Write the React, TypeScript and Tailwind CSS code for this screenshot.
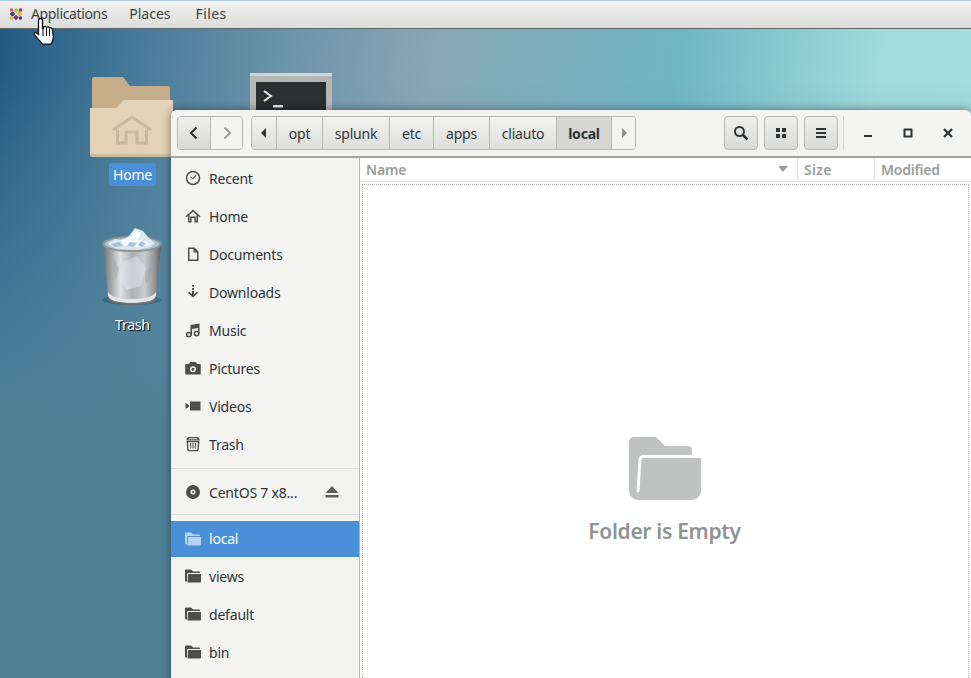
import type { ReactNode } from "react";

const iconColor = "#4d4d4d";

function Glyph({ children, className = "" }: { children: ReactNode; className?: string }) {
  return (
    <svg viewBox="0 0 16 16" width="16" height="16" fill={iconColor} className={"shrink-0 " + className}>
      {children}
    </svg>
  );
}

const FolderGlyph = ({ color = iconColor }: { color?: string }) => (
  <svg viewBox="0 0 16 16" width="16" height="16" className="shrink-0">
    <path d="M0 2.500a1 1 0 0 1 1-1h5l2 2h6a1 1 0 0 1 1 1V5H3a1 1 0 0 0-1 1v7.500H1a1 1 0 0 1-1-1z" fill={color} />
    <path d="M3 6h13v7.500a1 1 0 0 1-1 1H2.600z" fill={color} />
  </svg>
);

const places: { label: string; icon: ReactNode }[] = [
  {
    label: "Recent",
    icon: (
      <Glyph>
        <circle cx="8" cy="8" r="6.500" fill="none" stroke={iconColor} strokeWidth="1.500" />
        <path d="M8 8.600 11 5.200M8 8.600 5.600 7" fill="none" stroke={iconColor} strokeWidth="1.100" />
      </Glyph>
    ),
  },
  {
    label: "Home",
    icon: (
      <Glyph>
        <path
          d="M8 1.500 0.500 8.200l1 1L3 8v6.500h3.600V10h2.800v4.500H13V8l1.500 1.200 1-1zM8 3.800l3.500 3v6.200h-.6V8.500H5.100V13h-.6V6.800z"
          fillRule="evenodd"
        />
      </Glyph>
    ),
  },
  {
    label: "Documents",
    icon: (
      <Glyph>
        <path d="M3 1.500h6.500L13.500 5.500v9.500H3z M4.500 3v10.500h7.500V6.500H8.500V3z" fillRule="evenodd" />
      </Glyph>
    ),
  },
  {
    label: "Downloads",
    icon: (
      <Glyph>
        <path d="M7 1h2v1.800H7zM7 4h2v1.800H7zM7 7h2v3.300l2.900-2.500 1 1.100L8 13.500 3.100 8.900l1-1.100L7 10.300z" />
      </Glyph>
    ),
  },
  {
    label: "Music",
    icon: (
      <Glyph>
        <path d="M5.500 3 14.500 1.500v10h-1.500V6L7 7v6H5.500z" />
        <circle cx="3.800" cy="12.600" r="2.200" fill="none" stroke={iconColor} strokeWidth="1.500" />
        <circle cx="11.600" cy="11.600" r="2.200" fill="none" stroke={iconColor} strokeWidth="1.500" />
      </Glyph>
    ),
  },
  {
    label: "Pictures",
    icon: (
      <Glyph>
        <path
          d="M1 4h3l1-2h6l1 2h3a.8.8 0 0 1 .8.8v9a.8.8 0 0 1-.8.8H1a.8.8 0 0 1-.8-.8v-9A.8.8 0 0 1 1 4zm7 2.300a3 3 0 1 0 0 6 3 3 0 0 0 0-6zm0 1.500a1.500 1.500 0 1 1 0 3 1.500 1.500 0 0 1 0-3z"
          fillRule="evenodd"
        />
      </Glyph>
    ),
  },
  {
    label: "Videos",
    icon: (
      <Glyph>
        <path d="M5 3.500h10.500v9H5zM0.500 5l3.500 2.300v1.400L0.500 11z" />
      </Glyph>
    ),
  },
  {
    label: "Trash",
    icon: (
      <Glyph>
        <path d="M3 1h10l1.500 2v1.500h-13V3zM4 2.300 3.400 3.200h9.200L12 2.300z" fillRule="evenodd" />
        <path
          d="M1.500 5h13l-.8 9a1.500 1.500 0 0 1-1.500 1.300H3.800A1.500 1.500 0 0 1 2.300 14zm1.500 1.300.6 7.300.4.400h8l.4-.4.600-7.300z"
          fillRule="evenodd"
        />
        <path d="M5 7h1l.3 5.500h-1zM7.500 7h1v5.500h-1zM10 7h1l-.3 5.500h-1z" />
      </Glyph>
    ),
  },
];

const bookmarks = [{ label: "views" }, { label: "default" }, { label: "bin" }];

function SidebarRow({ icon, label, right }: { icon: ReactNode; label: string; right?: ReactNode }) {
  return (
    <div className="flex h-[38px] items-center gap-[8px] pl-[14px] pr-[20px] text-[#2e3436]">
      {icon}
      <span className="flex-1 truncate">{label}</span>
      {right}
    </div>
  );
}

function Segment({ width, children, active }: { width: string; children: ReactNode; active?: boolean }) {
  return (
    <div
      className={
        "flex h-full items-center justify-center border-r border-[#b6b6b3] " +
        width +
        (active
          ? " bg-[#d6d6d4] font-bold text-[#2e3436]"
          : " bg-gradient-to-b from-[#f2f2f1] to-[#dededc] text-[#2e3436]")
      }
    >
      {children}
    </div>
  );
}

function ToolButton({ children }: { children: ReactNode }) {
  return (
    <div className="flex h-[34px] w-[34px] items-center justify-center rounded-[4px] border border-[#b6b6b3] bg-gradient-to-b from-[#efefee] to-[#d9d9d7]">
      {children}
    </div>
  );
}

function HomeFolder() {
  return (
    <svg viewBox="0 0 86 84" width="86" height="84">
      <path d="M3 3a2 2 0 0 1 2-2h29l7 9h38a2 2 0 0 1 2 2v30H3z" fill="#c4ad88" />
      <path d="M1 32h26l8-8h48a1 1 0 0 1 1 1v53a2 2 0 0 1-2 2H3a2 2 0 0 1-2-2z" fill="#e3d2b6" />
      <path d="M1 78h84v1a2 2 0 0 1-2 2H3a2 2 0 0 1-2-2z" fill="#cdbb9f" />
      <g fill="none" stroke="#c9b899" strokeWidth="3">
        <path d="M24 54 43 41l19 13" />
        <path d="M28.500 54v13H37V56h11v11h9.500V54" />
      </g>
    </svg>
  );
}

function TrashCan() {
  return (
    <svg viewBox="0 0 66 78" width="66" height="78">
      <defs>
        <linearGradient id="can" x1="0" x2="1" y1="0" y2="0">
          <stop offset="0" stopColor="#6d7071" />
          <stop offset="0.12" stopColor="#9a9d9e" />
          <stop offset="0.3" stopColor="#dfe1e2" />
          <stop offset="0.5" stopColor="#aeb2b4" />
          <stop offset="0.72" stopColor="#c9cccd" />
          <stop offset="0.9" stopColor="#8e9192" />
          <stop offset="1" stopColor="#5a5c5d" />
        </linearGradient>
      </defs>
      <ellipse cx="33" cy="72" rx="30" ry="5" fill="#1d3a4a" fillOpacity="0.3" />
      <path d="M4 17 9 68c1 5 11 7 24 7s23-2 24-7l5-51z" fill="url(#can)" />
      <path d="M24 34 38 28l9 12-5 18-14 4-9-12z" fill="#dfe8ef" fillOpacity="0.5" />
      <path d="M14 30l6 10-3 12-2-8zM46 44l6-6-1 14-5 4z" fill="#8f9ca5" fillOpacity="0.35" />
      <path d="M9 64c3 5 12 7 24 7s21-2 24-7v4c-1 5-11 7-24 7S10 73 9 68z" fill="#e2e4e5" />
      <path d="M9 68c1 5 11 7 24 7s23-2 24-7v2c-2 5-11 7-24 7S11 75 9 70z" fill="#6c6f71" />
      <ellipse cx="33" cy="16" rx="30" ry="8" fill="#8d9295" />
      <ellipse cx="33" cy="16" rx="27.500" ry="6.200" fill="#aebfcd" />
      <path d="M8 16 16 11l6 1 8-4 6-8 8 3 5 6 7 6-4 4-14 3-20-1z" fill="#dce7f0" />
      <path d="M22 12 32 9l5-7 5 3-3 7 8 1 5 4-14 2-13-1z" fill="#f7fbfe" />
      <path d="M12 16l8-2 4 4-9 1zM31 14l7 1-4 4-6-1zM42 13l5 3-4 3-4-2z" fill="#a9c3d9" />
    </svg>
  );
}

function TerminalIcon() {
  return (
    <svg viewBox="0 0 82 60" width="82" height="60">
      <rect width="82" height="60" fill="#b6b8b8" />
      <rect width="82" height="3" fill="#d3d5d5" />
      <rect x="6" y="9" width="70" height="51" fill="#2a3131" />
      <path d="m14 18 7 5-7 5" fill="none" stroke="#f0f0ee" strokeWidth="2" />
      <path d="M23 32h10v2.500H23z" fill="#e6e6e4" />
    </svg>
  );
}

function CentosLogo() {
  return (
    <svg viewBox="0 0 14 14" width="14" height="14">
      <g transform="rotate(45 7 7)">
        <rect x="2.500" y="2.500" width="4" height="4" fill="#a8c84a" />
        <rect x="7.500" y="2.500" width="4" height="4" fill="#d6b84a" />
        <rect x="7.500" y="7.500" width="4" height="4" fill="#8a2f80" />
        <rect x="2.500" y="7.500" width="4" height="4" fill="#3c3b86" />
      </g>
      <rect x="1" y="1.500" width="3" height="3" fill="#d9578f" />
      <rect x="10" y="1.500" width="3" height="3" fill="#8a2f80" />
      <rect x="10" y="9.500" width="3" height="3" fill="#3c3b86" />
      <rect x="1" y="9.500" width="3" height="3" fill="#e0b04a" />
    </svg>
  );
}

function HandCursor() {
  return (
    <svg viewBox="0 0 24 30" width="24" height="30">
      <path
        d="M7.500 1.500c1.200 0 2 .8 2 2v8l1-.2V10c1-1 2.500-.8 3 .3 1-.8 2.500-.5 3 .7 1-.6 2.500 0 2.800 1.200l1 8c0 3-1 5-2.300 7H9.500C7 24 3.500 20.500 1.500 17.500c-.6-1.200.8-2.500 2-1.700l2 1.700V3.500c0-1.200.8-2 2-2z"
        fill="#fff"
        stroke="#111"
        strokeWidth="1.300"
      />
      <path d="M10 12v7M13.500 11v8M16.500 12v7" stroke="#111" strokeWidth="1.100" />
    </svg>
  );
}

export default function App() {
  return (
    <div className="relative h-[678px] w-[971px] overflow-hidden bg-[linear-gradient(to_bottom,rgba(79,129,153,0)_80px,#4f8199_420px),linear-gradient(100deg,#1f5a84_0px,#4f7f9d_170px,#6e95ab_300px,#88a8b7_440px,#70b6c4_680px,#a0dcdc_880px,#a4dede_971px)] font-['Noto_Sans',sans-serif] text-[14px] tracking-[-0.2px]">
      {/* top bar */}
      <div className="flex h-[29px] items-center border-t border-b border-t-[#a9cbe9] border-b-[#5e6668] bg-gradient-to-b from-[#f1f1f0] to-[#dcdcda] pb-[2px] text-[#3c4245]">
        <div className="ml-[9px] flex items-center">
          <CentosLogo />
        </div>
        <span className="ml-[8px] tracking-[-0.35px]">Applications</span>
        <span className="ml-[22px] tracking-[0px]">Places</span>
        <span className="ml-[25px] tracking-[0.4px]">Files</span>
      </div>

      {/* desktop icons */}
      <div className="absolute left-[89px] top-[76px]">
        <HomeFolder />
      </div>
      <div className="absolute left-[109px] top-[163px] rounded-[3px] bg-[#4a90d9] px-[4px] py-[2px] leading-[19px] text-white">
        Home
      </div>
      <div className="absolute left-[99px] top-[228px]">
        <TrashCan />
      </div>
      <div className="absolute left-[115px] top-[315px] leading-[19px] text-white [text-shadow:1px_1px_1px_#000]">
        Trash
      </div>
      <div className="absolute left-[250px] top-[73px]">
        <TerminalIcon />
      </div>

      {/* nautilus window */}
      <div className="absolute left-[171px] top-[110px] flex h-[600px] w-[800px] flex-col overflow-hidden rounded-t-[6px] bg-white shadow-[0_0_8px_rgba(0,0,0,0.45)]">
        <header className="flex h-[48px] items-start border-b-2 border-[#a2a29f] bg-[#f3f3f2] pl-[6px] pt-[6px]">
          <div className="flex h-[34px] w-[66px] overflow-hidden rounded-[4px] border border-[#b6b6b3]">
            <div className="flex w-[33px] items-center justify-center border-r border-[#b6b6b3] bg-gradient-to-b from-[#efefee] to-[#d9d9d7]">
              <svg viewBox="0 0 16 16" width="16" height="16" fill="none" stroke="#2e3436" strokeWidth="2">
                <path d="M10.500 2.500 5 8l5.500 5.500" />
              </svg>
            </div>
            <div className="flex flex-1 items-center justify-center bg-[#f3f3f2]">
              <svg viewBox="0 0 16 16" width="16" height="16" fill="none" stroke="#9a9c9c" strokeWidth="2">
                <path d="M5.500 2.500 11 8l-5.500 5.500" />
              </svg>
            </div>
          </div>

          <div className="ml-[8px] flex h-[34px] w-[385px] overflow-hidden rounded-[4px] border border-[#b6b6b3]">
            <Segment width="w-[25px]">
              <svg viewBox="0 0 8 10" width="8" height="10" fill="#2e3436">
                <path d="M6 0v10L1 5z" />
              </svg>
            </Segment>
            <Segment width="w-[46px]">opt</Segment>
            <Segment width="w-[67px]">splunk</Segment>
            <Segment width="w-[44px]">etc</Segment>
            <Segment width="w-[56px]">apps</Segment>
            <Segment width="w-[67px]">cliauto</Segment>
            <Segment width="w-[55px]" active>
              local
            </Segment>
            <div className="flex flex-1 items-center justify-center bg-[#f3f3f2]">
              <svg viewBox="0 0 8 10" width="8" height="10" fill="#8e9192">
                <path d="M2 0v10l5-5z" />
              </svg>
            </div>
          </div>

          <div className="ml-[88px] flex gap-[6px]">
            <ToolButton>
              <svg viewBox="0 0 16 16" width="16" height="16" fill="none" stroke="#2e3436" strokeWidth="2">
                <circle cx="6.500" cy="6.500" r="4.500" />
                <path d="m10 10 4.500 4.500" strokeWidth="2.500" />
              </svg>
            </ToolButton>
            <ToolButton>
              <svg viewBox="0 0 16 16" width="16" height="16" fill="#2e3436">
                <path d="M3 3h4v4H3zM9 3h4v4H9zM3 9h4v4H3zM9 9h4v4H9z" />
              </svg>
            </ToolButton>
            <ToolButton>
              <svg viewBox="0 0 16 16" width="16" height="16" fill="#2e3436">
                <path d="M3 3h10v2H3zM3 7h10v2H3zM3 11h10v2H3z" />
              </svg>
            </ToolButton>
          </div>

          <div className="ml-[5px] h-[34px] w-px bg-[#d6d6d4]" />

          <div className="flex h-[34px] flex-1 items-center">
            <div className="flex w-[46px] justify-center pl-[2px]">
              <svg viewBox="0 0 16 16" width="16" height="16" fill="#2e3436">
                <path d="M4 10h8v2H4z" />
              </svg>
            </div>
            <div className="flex w-[36px] justify-center">
              <svg viewBox="0 0 16 16" width="16" height="16" fill="none" stroke="#2e3436" strokeWidth="2">
                <path d="M4.500 4.500h7v7h-7z" />
              </svg>
            </div>
            <div className="flex w-[44px] justify-center">
              <svg viewBox="0 0 16 16" width="16" height="16" fill="none" stroke="#2e3436" strokeWidth="2.200">
                <path d="m4 4 8 8M12 4l-8 8" />
              </svg>
            </div>
          </div>
        </header>

        <div className="flex min-h-0 flex-1">
          <aside className="w-[189px] shrink-0 border-r border-[#b6b6b3] bg-[#f3f3f2]">
            <div className="h-[1px]" />
            {places.map((p) => (
              <SidebarRow key={p.label} icon={p.icon} label={p.label} />
            ))}
            <div className="mt-[5px] h-px bg-[#dcdcda]" />
            <div className="mt-[4px]">
              <SidebarRow
                label="CentOS 7 x8..."
                icon={
                  <Glyph>
                    <path
                      d="M8 1a7 7 0 1 0 0 14A7 7 0 0 0 8 1zm0 4.500a2.500 2.500 0 1 1 0 5 2.500 2.500 0 0 1 0-5zm0 1.500a1 1 0 1 0 0 2 1 1 0 0 0 0-2z"
                      fillRule="evenodd"
                    />
                  </Glyph>
                }
                right={
                  <svg viewBox="0 0 14 12" width="14" height="12" fill="#5c5f60">
                    <path d="M7 0l6.500 7H.5zM.5 9h13v2.500H.5z" />
                  </svg>
                }
              />
            </div>
            <div className="mt-[3px] h-px bg-[#dcdcda]" />
            <div className="mt-[6px] flex h-[36px] items-center gap-[8px] bg-[#4a90d9] pb-px pl-[14px] text-white">
              <FolderGlyph color="#b7d3f0" />
              <span>local</span>
            </div>
            {bookmarks.map((b) => (
              <SidebarRow key={b.label} icon={<FolderGlyph />} label={b.label} />
            ))}
          </aside>

          <main className="flex min-w-0 flex-1 flex-col bg-white">
            <div className="flex h-[24px] shrink-0 items-center border-b border-[#e2e2e0] pb-[1px] font-semibold text-[#9a9d9d]">
              <div className="flex h-full w-[438px] items-center border-r border-[#e2e2e0] pl-[6px]">
                <span className="flex-1">Name</span>
                <svg viewBox="0 0 10 6" width="10" height="6" fill="#9a9d9d" className="mr-[9px]">
                  <path d="M0 0h10L5 6z" />
                </svg>
              </div>
              <div className="flex h-full w-[77px] items-center border-r border-[#e2e2e0] pl-[6px] tracking-[0.3px]">
                Size
              </div>
              <div className="flex h-full flex-1 items-center pl-[6px]">Modified</div>
            </div>
            <div className="mx-[2px] mt-[2px] flex flex-1 flex-col items-center border border-dotted border-[#b4b4b4] pr-[2px] pt-[252px]">
              <svg viewBox="0 0 72 64" width="72" height="64">
                <path
                  d="M0 5a5 5 0 0 1 5-5h22l9 9h23a4 4 0 0 1 4 4v6h9v35a9 9 0 0 1-9 9H9a9 9 0 0 1-9-9z"
                  fill="#c0c2c1"
                />
                <path d="M72 19.500H14a3 3 0 0 0-3 3L9 54" fill="none" stroke="#fff" strokeWidth="3" strokeLinecap="round" />
              </svg>
              <div className="mt-[15px] text-[21px] font-semibold leading-[30px] tracking-[-0.3px] text-[#8f9393]">
                Folder is Empty
              </div>
            </div>
          </main>
        </div>
      </div>

      {/* pointer */}
      <div className="absolute left-[33px] top-[17px]">
        <HandCursor />
      </div>
    </div>
  );
}
